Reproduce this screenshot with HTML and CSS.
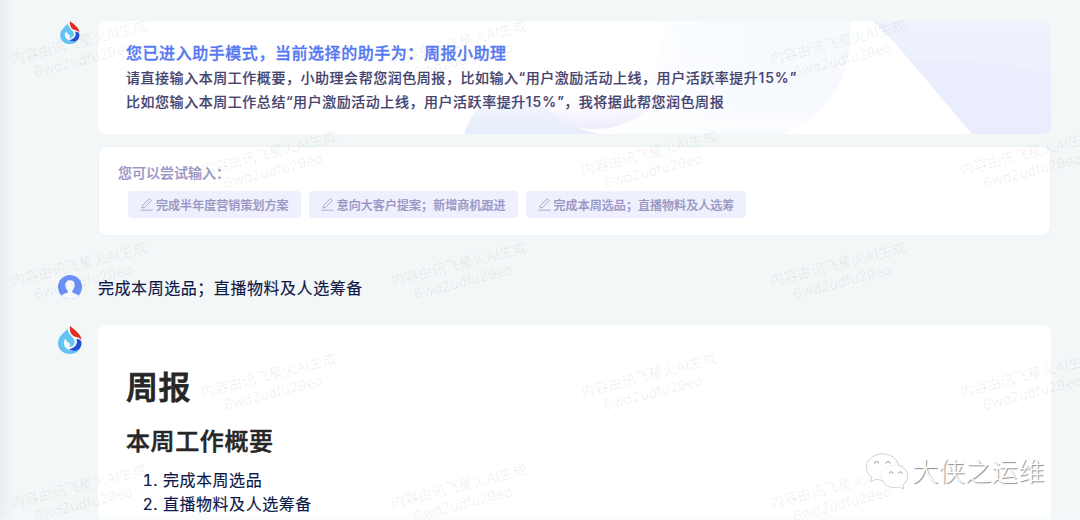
FILE: index.html
```html
<!DOCTYPE html>
<html lang="zh-CN">
<head>
    <meta charset="UTF-8">
    <meta name="viewport" content="width=device-width, initial-scale=1.0">
    <title>周报小助理</title>
    <link rel="stylesheet" href="styles.css">
</head>
<body>

<svg class="defs" width="0" height="0">
    <symbol id="flame" viewBox="0 0 24 28">
        <path fill="#64c3f5" d="M9.500 2.300C8 6 0 9.500 0 17.200 0 23.300 5.200 28 12 28c4 0 7.600-1.800 9.600-4.600-3.500 2-9.600 2-12.600-.6-3.600-3-4-7-1.600-10.300.6 2.700 2.400 3.100 3.700 4.600 1.200 1.400 1.200 2.600.2 4 4.200-.4 6.200-3.600 5-7C14.800 10.300 9.300 8 9.500 2.300z"/>
        <path fill="#2450d0" d="M18.500 13c1.600 5-1.200 9-7.600 10.300 4 2.600 8.700 1.900 11-.8 2-2.800 2-6.300.9-8-1.300-1.200-2.800-1.500-4.300-1.500z"/>
        <path fill="#de2f25" d="M12 0c4 3.600 11 7.600 11.600 13.900-3-3.200-7.200-2.500-9.600-5.100C12 6.500 11.600 3 12 0z"/>
    </symbol>
    <symbol id="pen" viewBox="0 0 13 13">
        <path fill="none" stroke="#a9a6cf" stroke-width="1" stroke-linejoin="round" d="M2.500 7.600 8.700 1.200q.6-.6 1.300 0l.7.700q.6.600 0 1.200L4.500 9.500l-2.500.5z"/>
        <path stroke="#b9b6da" stroke-width="1.200" d="M.4 12.200h12.200"/>
    </symbol>
</svg>

<div class="chat">
    <div class="row">
        <svg class="logo small"><use href="#flame"/></svg>
        <div class="banner">
            <svg class="banner-bg" viewBox="0 0 953 113" preserveAspectRatio="none">
                <defs>
                    <linearGradient id="sky" x1="0" y1="0" x2="0" y2="1">
                        <stop offset="0" stop-color="#f5fbff"/>
                        <stop offset=".45" stop-color="#f7f9fe"/>
                        <stop offset=".78" stop-color="#f6f9fe"/>
                        <stop offset=".9" stop-color="#fdfdff"/>
                        <stop offset="1" stop-color="#f5fafe"/>
                    </linearGradient>
                    <linearGradient id="fade" x1="0" y1="0" x2="1" y2="0">
                        <stop offset="0" stop-color="#fff"/>
                        <stop offset=".2" stop-color="#fff" stop-opacity=".7"/>
                        <stop offset=".7" stop-color="#fff" stop-opacity="0"/>
                    </linearGradient>
                    <linearGradient id="lens" x1="0" y1="0" x2="0" y2="1">
                        <stop offset="0" stop-color="#f3f2fd" stop-opacity="0"/>
                        <stop offset="1" stop-color="#ededfc"/>
                    </linearGradient>
                    <linearGradient id="hill" x1="0" y1="0" x2="0" y2="1">
                        <stop offset="0" stop-color="#f4f7fe"/>
                        <stop offset="1" stop-color="#e6edfb"/>
                    </linearGradient>
                    <linearGradient id="wing" x1="0" y1="0" x2="0" y2="1">
                        <stop offset="0" stop-color="#eef2fd"/>
                        <stop offset="1" stop-color="#ebedfd"/>
                    </linearGradient>
                </defs>
                <path fill="url(#sky)" d="M565 0h188c0 50-14 90-67 113H500c40-25 64-60 65-113z"/>
                <path fill="url(#fade)" d="M490 0h263v113H490z"/>
                <path fill="url(#hill)" d="M366 113c8-21 18-37 44-38 34 0 50 30 92 38z"/>
                <path fill="url(#lens)" d="M420 74h144c-22 28-47 34-69 34-30 0-45-20-75-34z"/>
                <path fill="url(#wing)" d="M774 0h179v113h-79L797 22z"/>
                <path fill="#e9eafc" opacity=".4" d="M812 40c50-5 95 3 141 13v60h-79z"/>
            </svg>
            <div class="banner-text">
                <h3>您已进入助手模式，当前选择的助手为：周报小助理</h3>
                <p>请直接输入本周工作概要，小助理会帮您润色周报，比如输入“用户激励活动上线，用户活跃率提升<span>15%</span>”</p>
                <p>比如您输入本周工作总结“用户激励活动上线，用户活跃率提升<span>15%</span>”，我将据此帮您润色周报</p>
            </div>
        </div>
    </div>

    <div class="tips">
        <div class="tips-title">您可以尝试输入：</div>
        <div class="chips">
            <div class="chip"><svg><use href="#pen"/></svg>完成半年度营销策划方案</div>
            <div class="chip"><svg><use href="#pen"/></svg>意向大客户提案；新增商机跟进</div>
            <div class="chip"><svg><use href="#pen"/></svg>完成本周选品；直播物料及人选筹</div>
        </div>
    </div>

    <div class="row user">
        <svg class="avatar" viewBox="0 0 24 24">
            <clipPath id="round"><circle cx="12" cy="12" r="12"/></clipPath>
            <circle cx="12" cy="12" r="12" fill="#6b90f7"/>
            <g fill="#f7f9fd" clip-path="url(#round)">
                <path d="M12 5.300c-3 0-4.700 2-4.700 4.800 0 2.500 1 4.700 2.500 6v1.400c-2 .8-4.600 1.100-6.300 3.500V24h17v-3c-1.700-2.400-4.300-2.700-6.300-3.500v-1.400c1.500-1.300 2.500-3.500 2.500-6 0-2.800-1.700-4.800-4.700-4.800z"/>
            </g>
        </svg>
        <div class="question">完成本周选品；直播物料及人选筹备</div>
    </div>

    <div class="row">
        <svg class="logo"><use href="#flame"/></svg>
        <div class="answer">
            <h1>周报</h1>
            <h2>本周工作概要</h2>
            <ol>
                <li>完成本周选品</li>
                <li>直播物料及人选筹备</li>
            </ol>
        </div>
    </div>
</div>

<div class="marks" id="marks"></div>
<div class="bottom-fade"></div>

<div class="account">
    <svg viewBox="0 0 44 38">
        <g class="bubble">
            <path d="M17.500 1C8.500 1 1.500 6.800 1.500 14.200c0 4 2.200 7.600 5.700 10L5.800 28.500l5-2.600c2 .7 4.300 1 6.700 1 9 0 16-5.800 16-12.900S26.500 1 17.500 1z"/>
            <path d="M29.500 12c-7.300 0-13 5-13 11.200s5.700 11.400 13 11.400c1.800 0 3.500-.3 5-.9l4.300 2.300-1.200-4c3-2 4.900-5.200 4.900-8.800 0-6.200-5.700-11.200-13-11.200z"/>
        </g>
        <g class="eyes">
            <path d="M9.500 10.500a2 2 0 0 1 4 0M21 10.500a2 2 0 0 1 4 0M24.500 20.500a1.700 1.700 0 0 1 3.400 0M33.700 20.500a1.700 1.700 0 0 1 3.400 0"/>
        </g>
    </svg>
    <span>大侠之运维</span>
</div>

<script>
// tiled watermark, every second line is shifted by half a tile
const marks = document.getElementById('marks');
let html = '';
for (let row = 0; row < 5; row++) {
    html += `<div class="mark-row${row % 2 ? ' shifted' : ''}">`;
    for (let i = 0; i < 3; i++) {
        html += '<div class="mark"><div>内容由讯飞星火AI生成<br>6wd2udfu29eo</div></div>';
    }
    html += '</div>';
}
marks.innerHTML = html;
</script>
</body>
</html>
```
FILE: styles.css
```css
* {
    box-sizing: border-box;
}
body {
    margin: 0;
    height: 520px;
    overflow: hidden;
    position: relative;
    font-family: Inter, "Noto Sans CJK SC", sans-serif;
    background: linear-gradient(90deg, #e9eef1 0, #f3f7f8 14px);
}
h1, h2, h3, p, ol {
    margin: 0;
}
.defs {
    position: absolute;
}
.chat {
    width: 1051px;
    height: 520px;
    overflow: hidden;
    padding: 21px 0 0 58px;
}
.row {
    display: flex;
    align-items: flex-start;
}
.logo {
    width: 24px;
    height: 28px;
    margin: 1px 16px 0 0;
    flex: none;
}
.logo.small {
    width: 20px;
    height: 23px;
    margin: 0 18px 0 2px;
}
.banner {
    position: relative;
    flex: 1;
    height: 113px;
    border-radius: 8px;
    background: #fff;
    overflow: hidden;
}
.banner-bg {
    position: absolute;
    left: 0;
    top: 0;
    width: 100%;
    height: 100%;
}
.banner-text {
    position: relative;
    padding: 20px 28px;
    color: #46446f;
    white-space: nowrap;
}
.banner-text h3 {
    font-size: 16px;
    line-height: 25px;
    font-weight: 500;
    letter-spacing: 0.55px;
    color: #5578f3;
    -webkit-text-stroke: 0.3px #5578f3;
}
.banner-text p {
    font-size: 14px;
    line-height: 24px;
    font-weight: 500;
    letter-spacing: 0.54px;
    -webkit-text-stroke: 0.15px #46446f;
}
.banner-text span {
    letter-spacing: 1px;
}
.tips {
    height: 88px;
    margin: 13px 1px 0 41px;
    padding: 14px 19px;
    border-radius: 8px;
    background: #fff;
    box-shadow: 0 0 4px #e8eff8;
    color: #9896c4;
    font-weight: 500;
    -webkit-text-stroke: 0.2px #9896c4;
}
.tips-title {
    font-size: 14px;
    line-height: 24px;
}
.chips {
    display: flex;
    gap: 8px;
    margin: 6px 0 0 10px;
}
.chip {
    display: flex;
    align-items: center;
    height: 27px;
    padding: 0 12px 1px;
    border-radius: 4px;
    background: #eff0fd;
    font-size: 12px;
    letter-spacing: 0.06px;
}
.chip svg {
    width: 13px;
    height: 13px;
    margin-right: 3px;
}
.user {
    margin: 40px 0 26px;
    align-items: center;
}
.avatar {
    width: 24px;
    height: 24px;
    margin-right: 16px;
}
.question {
    padding-top: 2px;
    font-size: 16px;
    line-height: 22px;
    letter-spacing: 0.55px;
    color: #0c1647;
    -webkit-text-stroke: 0.15px #0c1647;
}
.answer {
    flex: 1;
    height: 220px;
    padding: 38px 28px 0;
    border-radius: 8px 8px 0 0;
    background: #fff;
    color: #262626;
}
.answer h1 {
    font-size: 32px;
    line-height: 49px;
    font-weight: 500;
    letter-spacing: 0.5px;
    -webkit-text-stroke: 0.8px #262626;
}
.answer h2 {
    margin-top: 12px;
    font-size: 24px;
    line-height: 36px;
    font-weight: 500;
    letter-spacing: 0.6px;
    -webkit-text-stroke: 0.5px #262626;
}
.answer ol {
    margin-top: 8px;
    padding-left: 37px;
    font-size: 16px;
    line-height: 24px;
    letter-spacing: 0.53px;
    color: #0c1647;
    -webkit-text-stroke: 0.15px #0c1647;
}
.marks {
    position: absolute;
    left: 0;
    top: 0;
    width: 1080px;
    height: 520px;
    overflow: hidden;
    pointer-events: none;
}
.mark-row {
    display: flex;
    height: 111px;
}
.mark-row.shifted {
    margin-left: 190px;
}
.mark {
    width: 379.5px;
    flex: none;
    padding: 33px 0 0 10px;
}
.mark div {
    width: 142px;
    transform: rotate(-14.5deg);
    text-align: center;
    font-size: 14px;
    line-height: 18px;
    font-weight: 400;
    white-space: nowrap;
    color: rgba(0, 0, 0, 0.065);
    -webkit-text-stroke: 0.4px rgba(0, 0, 0, 0.05);
}
.bottom-fade {
    position: absolute;
    left: 0;
    right: 0;
    bottom: 0;
    height: 10px;
    background: linear-gradient(rgba(243, 247, 249, 0), rgba(243, 247, 249, 0.5));
}
.account {
    position: absolute;
    left: 865px;
    top: 453px;
    display: flex;
    align-items: center;
    font-size: 26.5px;
    line-height: 40px;
    font-weight: 300;
    color: #fff;
    white-space: nowrap;
    text-shadow: 1px 1px 1px #888;
}
.account span {
    margin-top: -3px;
}
.account svg {
    width: 44px;
    height: 38px;
    margin-right: 3px;
    filter: drop-shadow(0.6px 0.8px 0.5px #777);
}
.bubble {
    fill: #fff;
    stroke: #e6e6e6;
    stroke-width: 0.5;
}
.eyes {
    fill: none;
    stroke: #999;
    stroke-width: 1;
}
```
